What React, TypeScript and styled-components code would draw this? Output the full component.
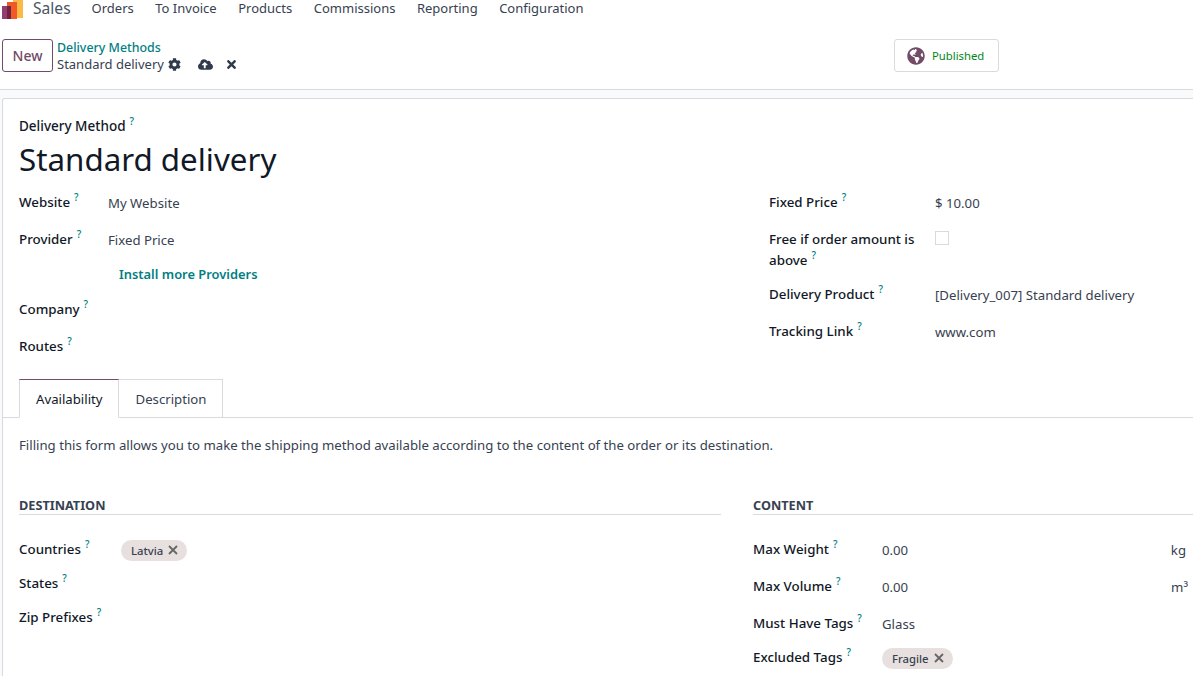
import React from "react";
import styled, { createGlobalStyle } from "styled-components";
import { FaCog, FaCloudUploadAlt, FaTimes, FaGlobeAmericas } from "react-icons/fa";

const GlobalStyle = createGlobalStyle`
  html, body {
    margin: 0;
    padding: 0;
    height: 676px;
    overflow: hidden;
    background: #f9fafb;
  }
  body {
    font-family: "Noto Sans", "Open Sans", sans-serif;
    font-size: 13.2px;
    line-height: 21px;
    color: #374151;
  }
`;

const Help = () => <HelpMark>?</HelpMark>;

type FieldProps = {
  label: React.ReactNode;
  children?: React.ReactNode;
  $width: number;
  $height?: number;
};

function Field({ label, children, $width, $height = 37 }: FieldProps) {
  return (
    <Row $labelWidth={$width} $height={$height}>
      <Label>
        {label}
        <Help />
      </Label>
      <Value>{children}</Value>
    </Row>
  );
}

const TagClose = () => (
  <TagCloseIcon width="10" height="10" viewBox="0 0 10 10">
    <path d="M1 1 L9 9 M9 1 L1 9" stroke="#666" strokeWidth="1.8" fill="none" />
  </TagCloseIcon>
);

function App() {
  return (
    <>
      <GlobalStyle />
      <Navbar>
        <LogoMark width="23" height="19" viewBox="0 0 23 19">
          <rect x="13" y="0" width="10" height="18" fill="#fbb945" />
          <rect x="7" y="2" width="10" height="17" fill="#f05a28" />
          <rect x="2" y="6" width="9" height="13" fill="#8f3f71" />
          <rect x="7" y="6" width="4" height="13" fill="#71223f" />
        </LogoMark>
        <AppName>Sales</AppName>
        <NavItem>Orders</NavItem>
        <NavItem>To Invoice</NavItem>
        <NavItem>Products</NavItem>
        <NavItem>Commissions</NavItem>
        <NavItem>Reporting</NavItem>
        <NavItem>Configuration</NavItem>
      </Navbar>
      <ControlPanel>
        <NewButton>New</NewButton>
        <Breadcrumb>
          <BreadLink>Delivery Methods</BreadLink>
          <BreadCurrent>
            Standard delivery
            <FaCog size={13} />
            <CloudIcon><FaCloudUploadAlt size={15} /></CloudIcon>
            <CloseIcon><FaTimes size={13} /></CloseIcon>
          </BreadCurrent>
        </Breadcrumb>
        <PublishedButton>
          <FaGlobeAmericas size={18} color="#714b67" />
          Published
        </PublishedButton>
      </ControlPanel>
      <Sheet>
        <Title>
          <TitleLabel>Delivery Method<Help /></TitleLabel>
          <TitleName>Standard delivery</TitleName>
        </Title>
        <Columns>
          <FieldColumn>
            <Field label="Website" $width={89}>My Website</Field>
            <Field label="Provider" $width={89}>Fixed Price</Field>
            <InstallLink>Install more Providers</InstallLink>
            <Field label="Company" $width={89} />
            <Field label="Routes" $width={89} />
          </FieldColumn>
          <FieldColumn>
            <Field label="Fixed Price" $width={166}>$ 10.00</Field>
            <Field label={<>Free if order amount is<br />above</>} $width={166} $height={55}>
              <Checkbox />
            </Field>
            <Field label="Delivery Product" $width={166}>[Delivery_007] Standard delivery</Field>
            <Field label="Tracking Link" $width={166}>www.com</Field>
          </FieldColumn>
        </Columns>
        <Tabs>
          <Tab $active>Availability</Tab>
          <Tab>Description</Tab>
        </Tabs>
        <TabBody>
          <Intro>
            Filling this form allows you to make the shipping method available according to the content of the order or its destination.
          </Intro>
          <Groups>
            <section>
              <GroupTitle>DESTINATION</GroupTitle>
              <Field label="Countries" $width={102} $height={34}>
                <Tag>Latvia <TagClose /></Tag>
              </Field>
              <Field label="States" $width={102} $height={34} />
              <Field label="Zip Prefixes" $width={102} $height={34} />
            </section>
            <section>
              <GroupTitle>CONTENT</GroupTitle>
              <Field label="Max Weight" $width={129}>
                <UnitValue $pad={7}>0.00<span>kg</span></UnitValue>
              </Field>
              <Field label="Max Volume" $width={129}>
                <UnitValue $pad={5}>0.00<span>m³</span></UnitValue>
              </Field>
              <Field label="Must Have Tags" $width={129} $height={34}>Glass</Field>
              <Field label="Excluded Tags" $width={129} $height={34}>
                <Tag>Fragile <TagClose /></Tag>
              </Field>
            </section>
          </Groups>
        </TabBody>
      </Sheet>
    </>
  );
}

const Navbar = styled.nav`
  height: 17px;
  background: #fff;
  display: flex;
  align-items: flex-start;
  font-size: 13px;
  line-height: 17px;
  position: relative;
`;

const LogoMark = styled.svg`
  flex: none;
`;

const AppName = styled.span`
  font-size: 15.6px;
  margin-left: 10px;
  margin-right: 21px;
  color: #4b5563;
`;

const NavItem = styled.span`
  margin-right: 21.5px;
  color: #374151;
`;

const ControlPanel = styled.header`
  height: 50px;
  background: #fff;
  border-bottom: 1px solid #d8dadd;
  display: flex;
  align-items: flex-start;
  padding: 22px 0 0 2px;
`;

const NewButton = styled.button`
  width: 51px;
  height: 33px;
  background: #fff;
  border: 1px solid #714b67;
  border-radius: 3px;
  color: #714b67;
  font: 500 14px "Noto Sans", sans-serif;
  padding: 0;
  flex: none;
`;

const Breadcrumb = styled.div`
  margin-left: 4px;
  display: flex;
  flex-direction: column;
  width: 300px;
`;

const BreadLink = styled.span`
  color: #017e84;
  font-size: 12.4px;
  font-weight: 500;
  line-height: 17px;
`;

const BreadCurrent = styled.span`
  display: flex;
  align-items: center;
  color: #374151;
  font-size: 13px;
  line-height: 17px;
  white-space: nowrap;
  svg {
    margin-left: 4px;
    color: #2f3a4a;
  }
`;

const CloudIcon = styled.span`
  display: flex;
  margin-left: 17px;
  svg { margin: 0; }
`;

const CloseIcon = styled.span`
  display: flex;
  margin-left: 12px;
  svg { margin: 0; }
`;

const PublishedButton = styled.button`
  margin-left: 537px;
  width: 105px;
  height: 33px;
  background: #fff;
  border: 1px solid #d8dadd;
  border-radius: 3px;
  display: flex;
  align-items: center;
  gap: 7px;
  padding: 0 0 0 12px;
  color: #008818;
  font: 400 11.3px "Noto Sans", sans-serif;
`;

const Sheet = styled.main`
  margin: 8px 0 0 2px;
  background: #fff;
  border: 1px solid #d8dadd;
  border-right: none;
  border-bottom: none;
  border-top-left-radius: 3px;
  padding-top: 16px;
  height: 578px;
  box-sizing: border-box;
  overflow: hidden;
`;

const Title = styled.div`
  padding-left: 16px;
`;

const TitleLabel = styled.div`
  font-size: 13.5px;
  font-weight: 500;
  color: #111827;
  line-height: 22px;
`;

const TitleName = styled.h1`
  margin: 0;
  font-size: 31.3px;
  line-height: 44px;
  font-weight: 400;
  color: #111827;
`;

const Columns = styled.div`
  display: grid;
  grid-template-columns: 750px 1fr;
  padding-left: 16px;
  margin-top: 10px;
`;

const FieldColumn = styled.div`
  display: flex;
  flex-direction: column;
`;

const Row = styled.div<{ $labelWidth: number; $height: number }>`
  display: grid;
  grid-template-columns: ${(p) => p.$labelWidth}px 1fr;
  height: ${(p) => p.$height}px;
  padding-top: 1px;
  box-sizing: border-box;
`;

const Label = styled.div`
  font-size: 13.35px;
  font-weight: 500;
  color: #111827;
`;

const Value = styled.div`
  color: #374151;
  padding-top: 1px;
`;

const HelpMark = styled.sup`
  color: #017e84;
  font-size: 10px;
  font-weight: 500;
  margin-left: 4px;
  line-height: 0;
  vertical-align: 6px;
`;

const InstallLink = styled.div`
  color: #017e84;
  font-size: 12.9px;
  font-weight: 600;
  margin: -1px 0 13px 100px;
`;

const Checkbox = styled.span`
  display: block;
  width: 12px;
  height: 12px;
  margin-top: 1px;
  border: 1px solid #d8dadd;
  background: #fff;
`;

const Tabs = styled.div`
  display: flex;
  align-items: flex-end;
  padding-left: 16px;
  height: 39px;
  margin-top: 6px;
  border-bottom: 1px solid #d8dadd;
`;

const Tab = styled.div<{ $active?: boolean }>`
  height: 39px;
  box-sizing: border-box;
  padding: ${(p) => (p.$active ? "9px 15px 0 16px" : "9px 15px 0 17px")};
  margin-bottom: -1px;
  border: 1px solid #d8dadd;
  border-left: ${(p) => (p.$active ? "1px solid #d8dadd" : "none")};
  border-top-color: ${(p) => (p.$active ? "#714b67" : "#d8dadd")};
  border-bottom-color: ${(p) => (p.$active ? "#fff" : "#d8dadd")};
  color: ${(p) => (p.$active ? "#111827" : "#374151")};
  background: #fff;
`;

const TabBody = styled.div`
  padding: 17px 0 0 16px;
`;

const Intro = styled.p`
  margin: 0;
  color: #374151;
`;

const Groups = styled.div`
  display: grid;
  grid-template-columns: 702px 1fr;
  column-gap: 32px;
  margin-top: 40px;
`;

const GroupTitle = styled.h2`
  margin: 0 0 23px;
  font-size: 12.7px;
  line-height: 18px;
  font-weight: 700;
  color: #374151;
  border-bottom: 1px solid #d8dadd;
`;

const UnitValue = styled.div<{ $pad: number }>`
  display: flex;
  justify-content: space-between;
  padding-right: ${(p) => p.$pad}px;
`;

const Tag = styled.span`
  display: inline-flex;
  align-items: center;
  gap: 5px;
  height: 21px;
  padding: 0 10px;
  border-radius: 11px;
  background: #e7e0de;
  color: #374151;
  font-size: 11.3px;
  font-weight: 500;
  margin-top: -1px;
`;

const TagCloseIcon = styled.svg`
  margin-bottom: 2px;
  margin-right: -1px;
`;

export default App;
